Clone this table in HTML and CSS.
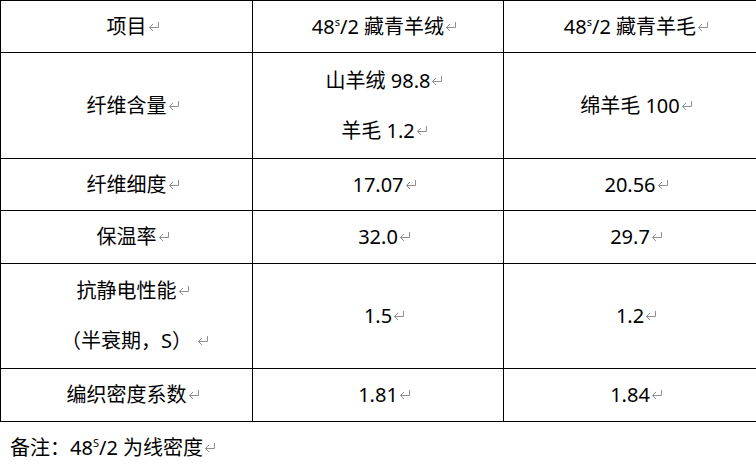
FILE: index.html
```html
<!DOCTYPE html>
<html lang="zh">
<head>
<meta charset="utf-8">
<link rel="stylesheet" href="styles.css">
</head>
<body>
<table class="grid">
  <colgroup><col class="c1"><col class="c2"><col class="c3"></colgroup>
  <tr class="r-head">
    <td>项目<span class="pm"><svg viewBox="0 0 12 10" width="12" height="10"><path d="M10.5 1 V6.5 H1.5 M5 3 L1.5 6.5 L5 10"/></svg></span></td>
    <td>48<sup class="sup">s</sup>/2 藏青羊绒<span class="pm"><svg viewBox="0 0 12 10" width="12" height="10"><path d="M10.5 1 V6.5 H1.5 M5 3 L1.5 6.5 L5 10"/></svg></span></td>
    <td>48<sup class="sup">s</sup>/2 藏青羊毛<span class="pm"><svg viewBox="0 0 12 10" width="12" height="10"><path d="M10.5 1 V6.5 H1.5 M5 3 L1.5 6.5 L5 10"/></svg></span></td>
  </tr>
  <tr class="r-tall">
    <td>纤维含量<span class="pm"><svg viewBox="0 0 12 10" width="12" height="10"><path d="M10.5 1 V6.5 H1.5 M5 3 L1.5 6.5 L5 10"/></svg></span></td>
    <td>
      <div class="line">山羊绒 98.8<span class="pm"><svg viewBox="0 0 12 10" width="12" height="10"><path d="M10.5 1 V6.5 H1.5 M5 3 L1.5 6.5 L5 10"/></svg></span></div>
      <div class="line">羊毛 1.2<span class="pm"><svg viewBox="0 0 12 10" width="12" height="10"><path d="M10.5 1 V6.5 H1.5 M5 3 L1.5 6.5 L5 10"/></svg></span></div>
    </td>
    <td>绵羊毛 100<span class="pm"><svg viewBox="0 0 12 10" width="12" height="10"><path d="M10.5 1 V6.5 H1.5 M5 3 L1.5 6.5 L5 10"/></svg></span></td>
  </tr>
  <tr class="r-a">
    <td>纤维细度<span class="pm"><svg viewBox="0 0 12 10" width="12" height="10"><path d="M10.5 1 V6.5 H1.5 M5 3 L1.5 6.5 L5 10"/></svg></span></td>
    <td>17.07<span class="pm"><svg viewBox="0 0 12 10" width="12" height="10"><path d="M10.5 1 V6.5 H1.5 M5 3 L1.5 6.5 L5 10"/></svg></span></td>
    <td>20.56<span class="pm"><svg viewBox="0 0 12 10" width="12" height="10"><path d="M10.5 1 V6.5 H1.5 M5 3 L1.5 6.5 L5 10"/></svg></span></td>
  </tr>
  <tr class="r-b">
    <td>保温率<span class="pm"><svg viewBox="0 0 12 10" width="12" height="10"><path d="M10.5 1 V6.5 H1.5 M5 3 L1.5 6.5 L5 10"/></svg></span></td>
    <td>32.0<span class="pm"><svg viewBox="0 0 12 10" width="12" height="10"><path d="M10.5 1 V6.5 H1.5 M5 3 L1.5 6.5 L5 10"/></svg></span></td>
    <td>29.7<span class="pm"><svg viewBox="0 0 12 10" width="12" height="10"><path d="M10.5 1 V6.5 H1.5 M5 3 L1.5 6.5 L5 10"/></svg></span></td>
  </tr>
  <tr class="r-tall2">
    <td>
      <div class="line">抗静电性能<span class="pm"><svg viewBox="0 0 12 10" width="12" height="10"><path d="M10.5 1 V6.5 H1.5 M5 3 L1.5 6.5 L5 10"/></svg></span></div>
      <div class="line">（半衰期，S）<span class="pm gap"><svg viewBox="0 0 12 10" width="12" height="10"><path d="M10.5 1 V6.5 H1.5 M5 3 L1.5 6.5 L5 10"/></svg></span></div>
    </td>
    <td>1.5<span class="pm"><svg viewBox="0 0 12 10" width="12" height="10"><path d="M10.5 1 V6.5 H1.5 M5 3 L1.5 6.5 L5 10"/></svg></span></td>
    <td>1.2<span class="pm"><svg viewBox="0 0 12 10" width="12" height="10"><path d="M10.5 1 V6.5 H1.5 M5 3 L1.5 6.5 L5 10"/></svg></span></td>
  </tr>
  <tr class="r-c">
    <td>编织密度系数<span class="pm"><svg viewBox="0 0 12 10" width="12" height="10"><path d="M10.5 1 V6.5 H1.5 M5 3 L1.5 6.5 L5 10"/></svg></span></td>
    <td>1.81<span class="pm"><svg viewBox="0 0 12 10" width="12" height="10"><path d="M10.5 1 V6.5 H1.5 M5 3 L1.5 6.5 L5 10"/></svg></span></td>
    <td>1.84<span class="pm"><svg viewBox="0 0 12 10" width="12" height="10"><path d="M10.5 1 V6.5 H1.5 M5 3 L1.5 6.5 L5 10"/></svg></span></td>
  </tr>
</table>
<p class="note">备注：48<sup class="sup">S</sup>/2 为线密度<span class="pm inline"><svg viewBox="0 0 12 10" width="12" height="10"><path d="M10.5 1 V6.5 H1.5 M5 3 L1.5 6.5 L5 10"/></svg></span></p>
</body>
</html>
```

FILE: styles.css
```css
html, body {
  margin: 0;
  padding: 0;
  background: #fff;
}
body {
  font-family: "Noto Sans", "Noto Sans CJK SC", sans-serif;
  font-size: 20px;
  color: #000;
}
.grid {
  border-collapse: collapse;
  table-layout: fixed;
  width: 756px;
}
.c1 { width: 252px; }
.c2 { width: 251px; }
.c3 { width: 253px; }
.grid td {
  border: 1px solid #000;
  text-align: center;
  vertical-align: middle;
  padding: 0;
  line-height: 24px;
  white-space: nowrap;
}
.r-head td { height: 51px; }
.r-tall td { height: 105px; }
.r-a td { height: 51px; }
.r-b td { height: 52px; }
.r-tall2 td { height: 104px; }
.r-c td { height: 52px; }
.line {
  line-height: 50px;
}
.sup {
  font-size: 11px;
  vertical-align: 8px;
  line-height: 0;
}
.pm {
  display: inline-block;
  width: 0;
  overflow: visible;
  vertical-align: baseline;
  line-height: 0;
}
.pm svg {
  display: block;
  fill: none;
  stroke: #8f8f8f;
  stroke-width: 1;
  margin-left: 1px;
  margin-top: -13px;
}
.pm.gap svg {
  margin-left: 5px;
}
.pm.inline {
  width: 12px;
}
.note {
  margin: 0;
  padding: 14px 0 0 10px;
  line-height: 24px;
}
```
